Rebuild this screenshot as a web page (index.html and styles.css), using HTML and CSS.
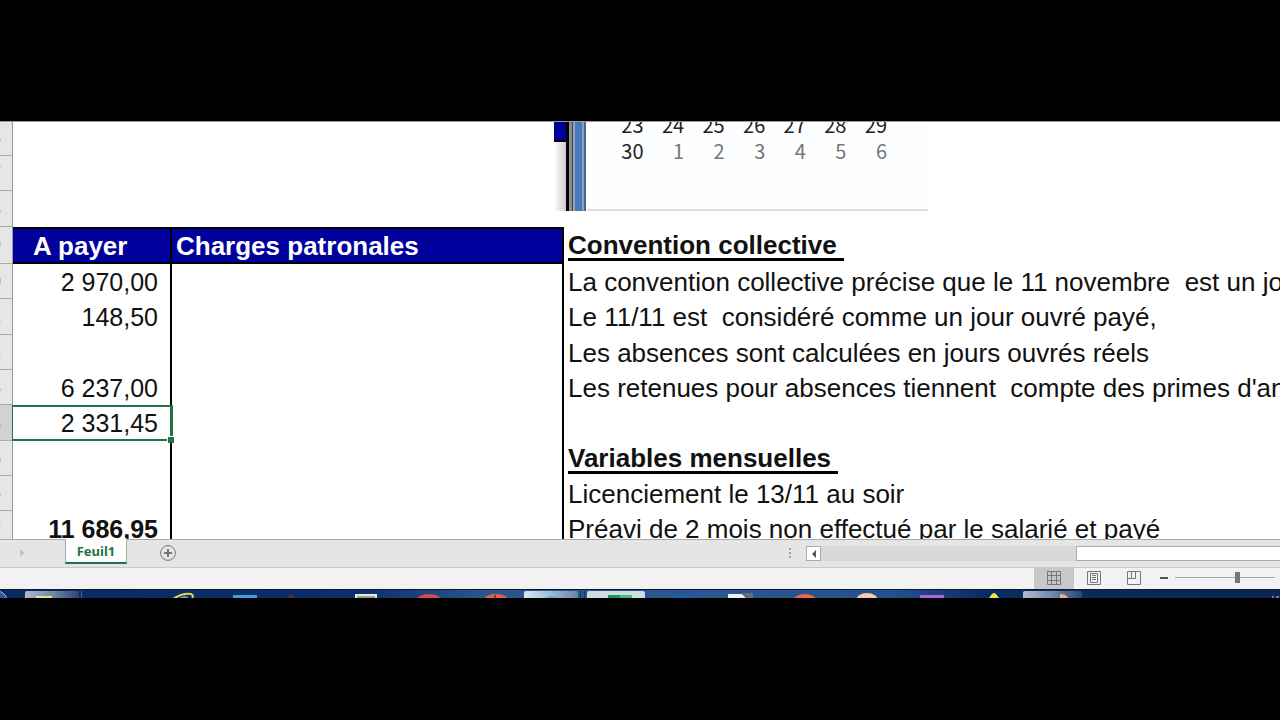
FILE: index.html
```html
<!DOCTYPE html>
<html lang="fr">
<head>
  <meta charset="UTF-8">
  <meta name="viewport" content="width=device-width, initial-scale=1.0">
  <title>Feuil1</title>
  <link rel="stylesheet" href="styles.css">
</head>
<body>
  <main class="sheet">
    <table class="grid">
      <colgroup>
        <col class="col-num">
        <col class="col-payer">
        <col class="col-charges">
        <col>
      </colgroup>
      <tbody>
        <tr><th class="num">6</th><td></td><td></td><td></td></tr>
        <tr><th class="num">7</th><td></td><td></td><td></td></tr>
        <tr class="tall"><th class="num">8</th><td></td><td></td><td></td></tr>
        <tr class="head">
          <th class="num">9</th>
          <th class="title payer">A payer</th>
          <th class="title charges">Charges patronales</th>
          <td class="note"><b>Convention collective </b></td>
        </tr>
        <tr><th class="num">0</th><td class="amount">2 970,00</td><td class="charges"></td><td class="note">La convention collective précise que le 11 novembre  est un jour férié</td></tr>
        <tr class="tall"><th class="num">1</th><td class="amount">148,50</td><td class="charges"></td><td class="note">Le 11/11 est  considéré comme un jour ouvré payé,</td></tr>
        <tr><th class="num">2</th><td class="amount"></td><td class="charges"></td><td class="note">Les absences sont calculées en jours ouvrés réels</td></tr>
        <tr><th class="num">3</th><td class="amount">6 237,00</td><td class="charges"></td><td class="note">Les retenues pour absences tiennent  compte des primes d'ancienneté</td></tr>
        <tr class="tall"><th class="num active">4</th><td class="amount selected">2 331,45</td><td class="charges"></td><td class="note"></td></tr>
        <tr><th class="num">5</th><td class="amount"></td><td class="charges"></td><td class="note"><b>Variables mensuelles </b></td></tr>
        <tr><th class="num">6</th><td class="amount"></td><td class="charges"></td><td class="note">Licenciement le 13/11 au soir</td></tr>
        <tr class="tall"><th class="num">7</th><td class="amount total">11 686,95</td><td class="charges"></td><td class="note">Préavi de 2 mois non effectué par le salarié et payé</td></tr>
      </tbody>
    </table>

    <div class="calendar">
      <div class="calendar-shadow"></div>
      <div class="calendar-frame"></div>
      <table class="days">
        <tr><td>23</td><td>24</td><td>25</td><td>26</td><td>27</td><td>28</td><td>29</td></tr>
        <tr class="next"><td class="current">30</td><td>1</td><td>2</td><td>3</td><td>4</td><td>5</td><td>6</td></tr>
      </table>
    </div>
  </main>

  <nav class="tabs">
    <button class="next-sheet" aria-label="Feuille suivante"><svg width="5" height="8" viewBox="0 0 5 8"><path d="M0 0L5 4L0 8z" fill="#c3c3c3"/></svg></button>
    <button class="tab">Feuil1</button>
    <button class="add" aria-label="Nouvelle feuille">
      <svg width="16" height="16" viewBox="0 0 16 16" fill="none" stroke="#777"><circle cx="8" cy="8" r="7.4"/><path d="M8 4v8M4 8h8" stroke-width="2"/></svg>
    </button>
    <svg class="grip" width="2" height="12" viewBox="0 0 2 12" fill="#a0a0a0"><path d="M0 1h2v2H0zM0 5h2v2H0zM0 9h2v2H0z"/></svg>
    <div class="scrollbar">
      <button class="scroll-left" aria-label="Défiler à gauche"><svg width="4" height="8" viewBox="0 0 4 8"><path d="M4 0v8L0 4z" fill="#555"/></svg></button>
      <div class="scroll-thumb"></div>
    </div>
  </nav>

  <div class="status">
    <button class="view on" aria-label="Normal">
      <svg width="14" height="14" viewBox="0 0 14 14" fill="none" stroke="#777"><path d="M.5 .5h13v13H.5zM.5 4.500h13M.5 9.500h13M4.500 .5v13M9.500 .5v13"/></svg>
    </button>
    <button class="view" aria-label="Mise en page">
      <svg width="14" height="14" viewBox="0 0 14 14" fill="none" stroke="#777"><path d="M.5 .5h13v13H.5zM3.500 2.500h7v9h-7zM5 4.500h4M5 6.500h4M5 8.500h4"/></svg>
    </button>
    <button class="view" aria-label="Sauts de page">
      <svg width="14" height="14" viewBox="0 0 14 14" fill="none" stroke="#777"><path d="M.5 .5h13v13H.5zM.5 7.500h8v-7M4.500 .5v7"/></svg>
    </button>
    <button class="minus" aria-label="Zoom arrière"><svg width="8" height="2" viewBox="0 0 8 2"><path d="M0 0h8v2H0z" fill="#555"/></svg></button>
    <input class="zoom" type="range" min="0" max="100" value="63" aria-label="Zoom">
  </div>

  <footer class="taskbar">
    <svg width="1280" height="9" viewBox="0 0 1280 9">
      <defs>
        <linearGradient id="glass"><stop offset="0" stop-color="#aebccd"/><stop offset=".5" stop-color="#7388a8"/><stop offset="1" stop-color="#2c4774"/></linearGradient>
        <linearGradient id="glass-light"><stop offset="0" stop-color="#dce6ee"/><stop offset=".5" stop-color="#9dbbd8"/><stop offset="1" stop-color="#6b83a5"/></linearGradient>
      </defs>
      <circle cx="-3" cy="11" r="10" fill="#285d8d" stroke="#9bc3df"/>
      <rect x="25" y="1" width="54" height="10" rx="2" fill="url(#glass)"/>
      <path d="M81.500 1v8" stroke="#47679a"/>
      <path d="M36 9V6h8v3z" fill="#d9e8ad"/><path d="M43 9V6h9v3z" fill="#f4e35c"/>
      <path d="M173 9q9-6 18-5q3 1 1 5" fill="none" stroke="#e9d442" stroke-width="2"/><path d="M178 9q5-4 10-2v2z" fill="#69afe0"/>
      <path d="M233 5h24v4h-24z" fill="#4998e2"/>
      <path d="M288 9q1-5 4-4l3 4z" fill="#5c3428"/>
      <path d="M355 4h22v5h-22z" fill="#d6eee8"/><path d="M357 6h18v3h-18z" fill="#a49f79"/>
      <ellipse cx="429" cy="10" rx="12" ry="6" fill="#d84c48"/>
      <ellipse cx="496" cy="10" rx="12" ry="6" fill="#e36347"/><path d="M494 9V5h2v4z" fill="#733b49"/>
      <rect x="524" y="1" width="54" height="10" rx="2" fill="url(#glass-light)"/><path d="M544 9q8-6 17 0z" fill="#68a7da"/>
      <path d="M580.500 1v8M584.500 1v8" stroke="#193967"/>
      <rect x="587" y="1" width="58" height="10" rx="2" fill="#cbdde2"/>
      <path d="M608 5h12v4h-12z" fill="#1d9760"/><path d="M620 5h12v4h-12z" fill="#45bd86"/>
      <path d="M672 5h21v4h-21z" fill="#1260b0"/>
      <path d="M728 4h14l5 5h-19z" fill="#eef0ec"/><path d="M742 3h11v6h-5z" fill="#64717b"/>
      <ellipse cx="805" cy="10" rx="11" ry="6" fill="#ec6946"/>
      <ellipse cx="867" cy="11" rx="11" ry="8" fill="#f5cdb4"/>
      <path d="M920 5h24v4h-24z" fill="#b364d8"/>
      <path d="M989 8l3-4q2-2 4 0l3 4z" fill="#f2e54d"/>
      <rect x="1023" y="1" width="59" height="10" rx="2" fill="url(#glass)"/><path d="M1060 9V4q7 0 8 5z" fill="#eeb384"/>
      <path d="M1272 7h2M1276 7h3" stroke="#c9d6e5"/>
    </svg>
  </footer>
</body>
</html>
```
FILE: styles.css
```css
* {
  box-sizing: border-box;
}
body {
  display: flex;
  flex-direction: column;
  height: 100vh;
  margin: 0;
  padding: 121px 0 122px;
  background: #000;
  font-family: "Liberation Sans", Arial, sans-serif;
  overflow: hidden;
}
button {
  display: flex;
  align-items: center;
  justify-content: center;
  padding: 0;
  border: none;
  background: none;
}

/* feuille */
.sheet {
  position: relative;
  flex: 1;
  min-height: 0;
  overflow: hidden;
  background: #fff;
  border-top: 1px solid #999;
}
.grid {
  width: 100%;
  margin-top: -1px;
  table-layout: fixed;
  border-spacing: 0;
  font-size: 26px;
  line-height: 30px;
  color: #111;
}
.col-num {
  width: 13px;
}
.col-payer {
  width: 159px;
}
.col-charges {
  width: 392px;
}
.grid tr {
  height: 35px;
}
.grid .tall {
  height: 36px;
}
.grid .head {
  height: 37px;
}
.grid td, .grid th {
  padding: 0;
  white-space: pre;
  overflow: hidden;
}
.grid .num {
  background: #e6e6e6;
  border-right: 1px solid #999;
  border-bottom: 1px solid #ababab;
  color: #777;
  font-size: 18px;
  font-weight: normal;
  text-align: left;
  text-indent: -9px;
}
.grid .active {
  background: #d2d2d2;
  border-right-color: #217346;
}
.grid .title {
  background: #00009c;
  border-top: 2px solid #000;
  border-bottom: 2px solid #000;
  border-right: 2px solid #000;
  color: #fff;
  text-align: left;
}
.grid .payer {
  padding-left: 20px;
}
.grid .title.charges {
  padding-left: 4px;
}
.grid .amount {
  padding-right: 12px;
  border-right: 2px solid #000;
  font-size: 25px;
  text-align: right;
}
.grid .charges {
  border-right: 2px solid #000;
}
.grid .note {
  padding-left: 4px;
}
.note b {
  display: inline-block;
  line-height: 26px;
  border-bottom: 3px solid #000;
}
.total {
  font-weight: bold;
}
.grid .selected {
  position: relative;
  overflow: visible;
  border-right-color: #217346;
  box-shadow: inset 0 2px #217346, inset 0 -2px #217346, -1px 0 #217346, 1px 0 #217346;
}
.selected::after {
  content: "";
  position: absolute;
  right: -4px;
  bottom: -2px;
  width: 6px;
  height: 6px;
  background: #217346;
  border: 1px solid #fff;
  border-width: 1px 0 0 1px;
}

/* calendrier posé sur la feuille */
.calendar {
  position: absolute;
  top: 0;
  left: 554px;
  display: flex;
  width: 374px;
  height: 89px;
  background: #fdfeff;
  border-bottom: 2px solid #dcdfdf;
}
.calendar-shadow {
  width: 12px;
  height: 89px;
  background: linear-gradient(#00009c 18px, #000 18px, #000 20px, transparent 20px), linear-gradient(to right, #fff, #ccc);
}
.calendar-frame {
  width: 21px;
  height: 89px;
  background: linear-gradient(to right, #000 3px, #8c8c8c 3px 6px, #444 6px 7px, #90a8c0 7px 9px, #4a7ab8 9px 16px, #7da5d0 16px 18px, #53647c 18px 20px, #fff 20px);
}
.days {
  width: 284px;
  height: 52px;
  margin: -10px 0 0 16px;
  table-layout: fixed;
  border-spacing: 0;
  font-family: "Noto Sans CJK JP", sans-serif;
  font-size: 20px;
  line-height: 26px;
  color: #222;
}
.days td {
  padding: 0;
  text-align: right;
}
.days .next {
  color: #777;
}
.days .current {
  color: #222;
}

/* onglets */
.tabs {
  display: flex;
  height: 29px;
  background: #e5e5e5;
  border-top: 1px solid #ababab;
  border-bottom: 1px solid #c8c8c8;
}
.next-sheet {
  width: 45px;
  height: 26px;
}
.tab {
  width: 62px;
  height: 25px;
  margin: -1px 33px 0 20px;
  background: #fff;
  border: 1px solid #ababab;
  border-width: 0 1px 2px;
  border-bottom-color: #217346;
  color: #217346;
  font: bold 13px "Noto Sans", sans-serif;
}
.add {
  width: 16px;
  height: 26px;
}
.grip {
  margin: 7px 15px 0 auto;
}
.scrollbar {
  display: flex;
  width: 474px;
  height: 15px;
  margin-top: 6px;
  background: #d8d8d8;
}
.scroll-left {
  width: 15px;
  background: #fff;
  border: 1px solid #ababab;
}
.scroll-thumb {
  width: 204px;
  margin-left: auto;
  background: #fff;
  border: 1px solid #ababab;
  border-right: none;
}

/* barre d'état */
.status {
  display: flex;
  align-items: center;
  justify-content: flex-end;
  height: 21px;
  padding-right: 5px;
  background: #f2f2f2;
}
.view {
  width: 40px;
  height: 21px;
  padding-bottom: 2px;
}
.on {
  background: #c8c8c8;
}
.minus {
  width: 20px;
  height: 20px;
  padding-bottom: 2px;
}
.zoom {
  appearance: none;
  width: 100px;
  height: 12px;
  margin: 0 0 2px 1px;
  background: linear-gradient(#a6a6a6, #a6a6a6) center / 100% 1px no-repeat;
}
.zoom::-webkit-slider-thumb {
  appearance: none;
  width: 5px;
  height: 11px;
  background: #777;
}

.taskbar {
  height: 9px;
  overflow: hidden;
  background: linear-gradient(to right, #082a60, #0a2f6b 28%, #2b568c 38%, #2a5590 60%, #23508c 70%, #0a2c62 77%, #0a2550);
  border-top: 1px solid #0b1a33;
}
.taskbar svg {
  display: block;
}
```
